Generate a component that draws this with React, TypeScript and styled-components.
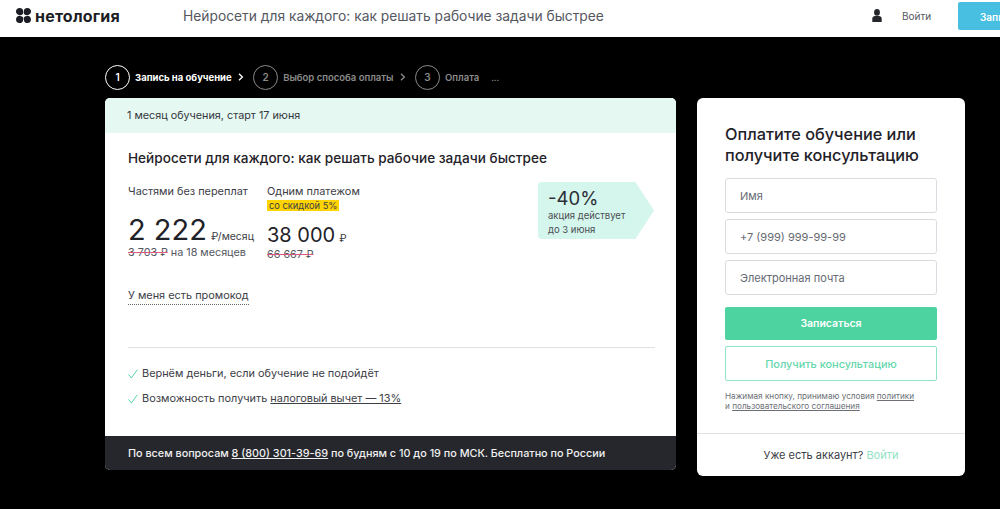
import React from 'react';
import styled, { createGlobalStyle } from 'styled-components';

const GlobalStyle = createGlobalStyle`
  html, body {
    margin: 0;
    padding: 0;
    background: #000;
    overflow: hidden;
  }
  body {
    font-family: Inter, "Open Sans", "Liberation Sans", sans-serif;
    color: #2b2e36;
  }
  * {
    box-sizing: border-box;
  }
`

function Logo() {
  return (
    <svg width="15" height="15" viewBox="0 0 16 16" aria-hidden="true">
      <path fill="#1b1d24" d="M0 3.8C0 1.4 1.7 0 3.8 0c2.2 0 3.8 1.2 3.8 3.3 0 .8.3 1.2 0 2.2-.5 1.5-1.6 2-3.1 2.1C1.9 7.8 0 6.2 0 3.8z" />
      <path fill="#1b1d24" d="M16 3.8C16 1.4 14.3 0 12.2 0 10 0 8.4 1.2 8.4 3.3c0 .8-.3 1.2 0 2.2.5 1.5 1.6 2 3.1 2.1 2.6.2 4.5-1.4 4.5-3.8z" />
      <path fill="#1b1d24" d="M0 12.2C0 14.6 1.7 16 3.8 16c2.2 0 3.8-1.2 3.8-3.3 0-.8.3-1.2 0-2.2-.5-1.5-1.6-2-3.1-2.1C1.9 8.2 0 9.8 0 12.2z" />
      <path fill="#1b1d24" d="M16 12.2c0 2.4-1.7 3.8-3.8 3.8-2.2 0-3.8-1.2-3.8-3.3 0-.8-.3-1.2 0-2.2.5-1.5 1.6-2 3.1-2.1 2.6-.2 4.5 1.4 4.5 3.8z" />
    </svg>
  );
}

function UserIcon() {
  return (
    <svg width="10" height="13" viewBox="0 0 10 13" aria-hidden="true">
      <ellipse cx="5" cy="3.4" rx="2.9" ry="3.3" fill="#24262c" />
      <path fill="#24262c" d="M0.3 13V9.6C0.3 8 1.6 7 3 7h4c1.4 0 2.7 1 2.7 2.6V13z" />
    </svg>
  );
}

function Chevron({ muted }: { muted?: boolean }) {
  return (
    <ChevronIcon width="6" height="8" viewBox="0 0 6 8" aria-hidden="true">
      <path d="M1 .8 4.4 4 1 7.2" fill="none" stroke={muted ? '#8b8b8b' : '#fff'} strokeWidth="1.3" />
    </ChevronIcon>
  );
}

function Check() {
  return (
    <svg width="10" height="10" viewBox="0 0 10 10" aria-hidden="true">
      <path d="M.6 5.4 3.3 9 9.3.8" fill="none" stroke="#55d3a4" strokeWidth="1" />
    </svg>
  );
}

function App() {
  return (
    <>
      <GlobalStyle />
      <Header>
        <LogoBox>
          <Logo />
          <LogoText>нетология</LogoText>
        </LogoBox>
        <CourseTitle>Нейросети для каждого: как решать рабочие задачи быстрее</CourseTitle>
        <UserBox>
          <UserIcon />
          <LoginLink>Войти</LoginLink>
        </UserBox>
        <HeaderButton>Записаться</HeaderButton>
      </Header>

      <Main>
        <LeftColumn>
          <Steps>
            <StepCircle $active>1</StepCircle>
            <StepLabel $active>Запись на обучение</StepLabel>
            <Chevron />
            <StepCircle>2</StepCircle>
            <StepLabel>Выбор способа оплаты</StepLabel>
            <Chevron muted />
            <StepCircle>3</StepCircle>
            <StepLabel>Оплата</StepLabel>
            <StepDots>...</StepDots>
          </Steps>

          <Card>
            <CardTop>1 месяц обучения, старт 17 июня</CardTop>
            <CardBody>
              <CardTitle>Нейросети для каждого: как решать рабочие задачи быстрее</CardTitle>
              <PriceRow>
                <PriceColumn $width={139}>
                  <PriceLabel>Частями без переплат</PriceLabel>
                  <BigPrice>
                    2 222<PriceUnit>₽/месяц</PriceUnit>
                  </BigPrice>
                  <OldPrice>
                    <s>3 703 ₽</s> на 18 месяцев
                  </OldPrice>
                </PriceColumn>
                <PriceColumn $width={271}>
                  <PriceLabel>Одним платежом</PriceLabel>
                  <Discount>со скидкой 5%</Discount>
                  <MiddlePrice>
                    38 000<PriceUnit>₽</PriceUnit>
                  </MiddlePrice>
                  <OldPrice>
                    <s>66 667 ₽</s>
                  </OldPrice>
                </PriceColumn>
                <Promo>
                  <PromoValue>-40%</PromoValue>
                  <PromoText>акция действует</PromoText>
                  <PromoText>до 3 июня</PromoText>
                </Promo>
              </PriceRow>
              <PromoCode>У меня есть промокод</PromoCode>
              <Divider />
              <Benefit>
                <Check />
                Вернём деньги, если обучение не подойдёт
              </Benefit>
              <Benefit>
                <Check />
                <span>Возможность получить <u>налоговый вычет — 13%</u></span>
              </Benefit>
            </CardBody>
            <CardFooter>
              По всем вопросам <u>8 (800) 301-39-69</u> по будням с 10 до 19 по МСК. Бесплатно по России
            </CardFooter>
          </Card>
        </LeftColumn>

        <FormCard>
          <Form>
            <FormTitle>Оплатите обучение или получите консультацию</FormTitle>
            <Field placeholder="Имя" />
            <Field placeholder="+7 (999) 999-99-99" />
            <Field placeholder="Электронная почта" />
            <SubmitButton type="button">Записаться</SubmitButton>
            <ConsultButton type="button">Получить консультацию</ConsultButton>
            <Terms>
              Нажимая кнопку, принимаю условия <u>политики</u>
              <br />и <u>пользовательского соглашения</u>
            </Terms>
          </Form>
          <FormFooter>
            Уже есть аккаунт? <GreenLink>Войти</GreenLink>
          </FormFooter>
        </FormCard>
      </Main>
    </>
  );
}

export default App;

const Header = styled.header`
  height: 37px;
  width: 1000px;
  background: #fff;
  display: flex;
  align-items: center;
  padding: 0 0 6px 16px;
  overflow: hidden;
`

const LogoBox = styled.div`
  width: 167px;
  flex: none;
  display: flex;
  align-items: center;
  gap: 4px;
`

const LogoText = styled.span`
  font-size: 16px;
  font-weight: 700;
  letter-spacing: 0.2px;
  color: #1b1d24;
`

const CourseTitle = styled.div`
  width: 689px;
  flex: none;
  font-size: 13.8px;
  color: #55585f;
`

const UserBox = styled.div`
  width: 86px;
  flex: none;
  display: flex;
  align-items: center;
  gap: 20px;
`

const LoginLink = styled.span`
  font-size: 10px;
  color: #55585f;
`

const HeaderButton = styled.div`
  flex: none;
  width: 90px;
  height: 28px;
  padding: 9px 0 0 22px;
  background: #48bfe0;
  border-radius: 2px;
  color: #fff;
  font-size: 10px;
  font-weight: 600;
`

const Main = styled.main`
  display: flex;
  align-items: flex-start;
  gap: 21px;
  padding: 27px 0 0 105px;
`

const LeftColumn = styled.div`
  width: 571px;
`

const Steps = styled.div`
  display: flex;
  align-items: center;
  height: 26px;
  margin-bottom: 8px;
`

const ChevronIcon = styled.svg`
  flex: none;
  margin-right: 9.5px;
`

const StepCircle = styled.span<{ $active?: boolean }>`
  width: 25px;
  height: 25px;
  flex: none;
  display: flex;
  align-items: center;
  justify-content: center;
  border: 1.5px solid ${p => (p.$active ? '#fff' : '#8b8b8b')};
  border-radius: 50%;
  color: ${p => (p.$active ? '#fff' : '#8b8b8b')};
  font-size: 10px;
  font-weight: 600;
`

const StepLabel = styled.span<{ $active?: boolean }>`
  margin: 0 6px 0 5px;
  font-size: 9.5px;
  font-weight: ${p => (p.$active ? 700 : 600)};
  color: ${p => (p.$active ? '#fff' : '#8b8b8b')};
  white-space: nowrap;
`

const StepDots = styled.span`
  margin-left: 6px;
  font-size: 9px;
  color: #8b8b8b;
`

const Card = styled.section`
  height: 372px;
  display: flex;
  flex-direction: column;
  background: #fff;
  border-radius: 5px;
  overflow: hidden;
`

const CardTop = styled.div`
  height: 35px;
  padding: 11px 0 0 22px;
  background: #e6f8f2;
  font-size: 10.8px;
  color: #33363d;
`

const CardBody = styled.div`
  flex: 1;
  padding: 17px 21px 0 23px;
`

const CardTitle = styled.h2`
  margin: 0 0 19px;
  font-size: 13.6px;
  line-height: 16px;
  font-weight: 500;
  white-space: nowrap;
  color: #1f2229;
`

const PriceRow = styled.div`
  display: flex;
  height: 83px;
`

const PriceColumn = styled.div<{ $width: number }>`
  width: ${p => p.$width}px;
  flex: none;
`

const PriceLabel = styled.div`
  font-size: 10.9px;
  line-height: 13px;
  color: #3d4047;
`

const Discount = styled.div`
  display: inline-block;
  height: 11px;
  margin-top: 2px;
  padding: 0 2px;
  background: #ffd400;
  font-size: 9.3px;
  line-height: 11px;
  color: #3d4047;
  vertical-align: top;
`

const BigPrice = styled.div`
  margin-top: 21px;
  font-size: 29px;
  line-height: 22px;
  white-space: nowrap;
  color: #1f2229;
`

const MiddlePrice = styled.div`
  margin-top: 7px;
  margin-bottom: 1px;
  font-size: 20px;
  line-height: 20px;
  white-space: nowrap;
  color: #1f2229;
`

const PriceUnit = styled.span`
  margin-left: 4px;
  font-size: 10.5px;
  color: #3d4047;
`

const OldPrice = styled.div`
  margin-top: -2px;
  font-size: 10.8px;
  line-height: 13px;
  color: #55585f;

  s {
    text-decoration-color: #e0567f;
  }
`

const Promo = styled.div`
  width: 116px;
  height: 57px;
  padding: 7px 0 0 10px;
  flex: none;
  margin-top: -3px;
  background: #d5f6ec;
  clip-path: polygon(2px 0, 84% 0, 100% 50%, 84% 100%, 2px 100%, 0 calc(100% - 2px), 0 2px);
`

const PromoValue = styled.div`
  font-size: 18.5px;
  line-height: 19px;
  color: #2b2e36;
`

const PromoText = styled.div`
  margin-top: 2px;
  font-size: 9.5px;
  line-height: 12px;
  color: #4b4e55;
`

const PromoCode = styled.div`
  display: inline-block;
  margin-top: 21px;
  padding-bottom: 2px;
  border-bottom: 1px dotted #666;
  font-size: 10.9px;
  line-height: 13px;
  color: #3d4047;
`

const Divider = styled.hr`
  margin: 42px 0 19px;
  border: none;
  border-top: 1px solid #dfe1e6;
`

const Benefit = styled.div`
  display: flex;
  align-items: center;
  gap: 4px;
  margin-bottom: 12px;
  font-size: 10.9px;
  line-height: 13px;
  color: #3d4047;
`

const CardFooter = styled.footer`
  height: 34px;
  padding: 11px 0 0 23px;
  background: #26272c;
  font-size: 10.8px;
  font-weight: 500;
  color: #f0f0f0;
`

const FormCard = styled.aside`
  width: 268px;
  height: 378px;
  margin-top: 34px;
  display: flex;
  flex-direction: column;
  background: #fff;
  border-radius: 6px;
`

const Form = styled.form`
  height: 336px;
  padding: 26px 28px 0;
  border-bottom: 1px solid #dfe1e6;
`

const FormTitle = styled.h3`
  margin: 0 0 12px;
  font-size: 16.3px;
  line-height: 21px;
  font-weight: 500;
  color: #1f2229;
`

const Field = styled.input`
  display: block;
  width: 100%;
  height: 35px;
  margin-bottom: 6px;
  padding: 0 14px;
  border: 1px solid #d9dbe0;
  border-radius: 3px;
  background: #fff;
  font-family: inherit;
  font-size: 11px;

  &::placeholder {
    color: #666a72;
    opacity: 1;
  }
`

const SubmitButton = styled.button`
  display: block;
  width: 100%;
  height: 33px;
  margin-top: 12px;
  border: none;
  border-radius: 2px;
  background: #4cd3a0;
  color: #fff;
  font-family: inherit;
  font-size: 10.5px;
  font-weight: 600;
`

const ConsultButton = styled.button`
  display: block;
  width: 100%;
  height: 35px;
  margin-top: 6px;
  border: 1px solid #8fe3c5;
  border-radius: 2px;
  background: #fff;
  color: #66d7ad;
  font-family: inherit;
  font-size: 10.9px;
  font-weight: 500;
`

const Terms = styled.p`
  margin: 10px 0 0;
  font-size: 8.2px;
  line-height: 10px;
  color: #6c6f76;
`

const FormFooter = styled.div`
  flex: 1;
  display: flex;
  align-items: center;
  justify-content: center;
  gap: 3px;
  font-size: 11px;
  color: #3d4047;
`

const GreenLink = styled.span`
  color: #93e2c4;
`
